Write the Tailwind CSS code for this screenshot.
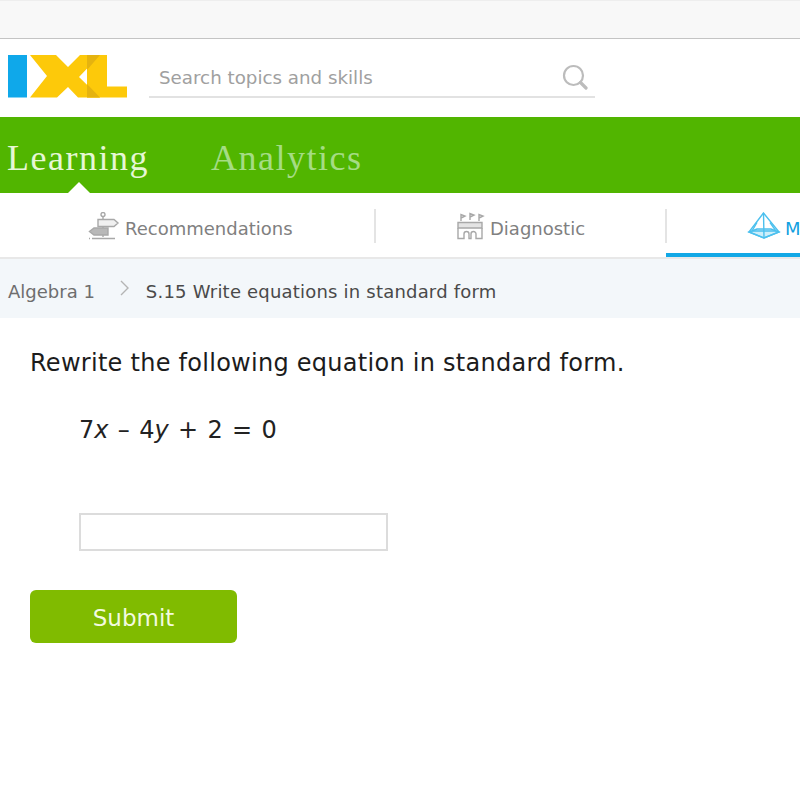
<!DOCTYPE html>
<html>
<head>
<meta charset="utf-8">
<script src="https://cdn.jsdelivr.net/npm/@tailwindcss/browser@4"></script>
</head>
<body class="bg-white font-['DejaVu_Sans',sans-serif] overflow-hidden">
<div class="w-[800px] h-[801px] overflow-hidden flex flex-col">
  <div class="h-[39px] bg-[#f8f8f8] border-b border-[#c4c4c4] border-t border-t-[#eeeeee] shrink-0"></div>

  <div class="h-[78px] flex items-start shrink-0">
    <svg class="ml-[7px] mt-[15px] shrink-0" width="121" height="45" viewBox="7 54 121 45">
      <rect x="8" y="55" width="19" height="42.5" fill="#0fa8ea"/>
      <path d="M30 55H56L68 67L80 55H100L79 77L100 97.5H78L68 87L57 97.5H30L47 76Z" fill="#fdc90a"/>
      <path d="M87 55H107V86.5H127V97.5H87Z" fill="#fdc90a"/>
      <path d="M87 55H100L87 70ZM87 84L100 97.5H87Z" fill="#e5b30f"/>
    </svg>
    <div class="ml-[21px] mt-[16px] w-[446px] h-[43px] border-b-2 border-[#e2e2e2] flex items-center justify-between pl-[10px] pr-[7px] shrink-0">
      <span class="text-[18.25px] text-[#a0a0a0] leading-none mt-[5px]">Search topics and skills</span>
      <svg class="mt-[2px]" width="26" height="26" viewBox="0 0 26 26" fill="none" stroke="#bcbcbc">
        <circle cx="11.5" cy="11.5" r="9.5" stroke-width="2.2"/>
        <path d="M18.5 18.5L24 24" stroke-width="3.2" stroke-linecap="round"/>
      </svg>
    </div>
  </div>

  <div class="relative h-[76px] bg-[#51b500] flex items-center pl-[7px] pt-[5px] shrink-0 font-['Liberation_Serif',serif] text-[36px] tracking-[1.5px]">
    <span class="text-[#e6f7d5] w-[204px] whitespace-nowrap">Learning</span>
    <span class="text-[#a5dc84] whitespace-nowrap">Analytics</span>
    <div class="absolute left-[68px] bottom-0 w-0 h-0 border-x-[11px] border-x-transparent border-b-[11px] border-b-white"></div>
  </div>

  <div class="relative h-[66px] flex border-b-2 border-[#e8e8e8] shrink-0 text-[18px] text-[#808080] whitespace-nowrap">
    <div class="w-[376px] h-[34px] mt-[16px] border-r-2 border-[#e4e4e4] flex items-center pl-[88px] gap-[5px] shrink-0">
      <svg class="translate-y-[2px] shrink-0" width="32" height="32" viewBox="88 212 32 32" fill="none" stroke="#a8a8a8" stroke-width="1.4">
        <circle cx="103" cy="214.5" r="2"/>
        <path d="M103 217V237M92 238.5H115M89 238.5H90" />
        <path d="M98 219.5H114L118 223L114 226.5H98Z" fill="#f0f0f0"/>
        <path d="M108 228H94L89.5 231.5L94 235H108Z" fill="#b8b8b8"/>
      </svg>
      <span class="translate-y-[2px]">Recommendations</span>
    </div>
    <div class="w-[291px] h-[34px] mt-[16px] border-r-2 border-[#e4e4e4] flex items-center pl-[80px] gap-[2px] shrink-0">
      <svg class="translate-y-[2px] shrink-0" width="32" height="32" viewBox="456 212 32 32" fill="none" stroke="#a8a8a8" stroke-width="1.4">
        <path d="M461 221V214.5L465 216L461 218M470 220V213.5L474 215L470 217M479 221V214.5L483 216L479 218" />
        <path d="M458 222.5H482V228H458Z" fill="#e4e4e4"/>
        <path d="M458 228V238.5H464V234A2.5 2.5 0 0 1 469 234V238.5H471V234A2.5 2.5 0 0 1 476 234V238.5H482V228"/>
      </svg>
      <span class="translate-y-[2px]">Diagnostic</span>
    </div>
    <div class="absolute left-[666px] right-0 bottom-0 h-[4px] bg-[#12a8e6]"></div>
    <div class="flex items-center pl-[80px] gap-[4px] h-[34px] mt-[18px] text-[#12a0e0] shrink-0">
      <svg class="shrink-0" width="34" height="32" viewBox="747 212 34 32" fill="none" stroke="#4cc0ee" stroke-width="1.4">
        <path d="M749 232L764 238L779 232L771 229H757Z" fill="#cdeefa"/>
        <path d="M763.5 213L749 232L764 238L779 232Z"/>
        <path d="M763.5 213L764 238M757 222.5L752 231H776L770 222.5"/>
      </svg>
      <span>M</span>
    </div>
  </div>

  <div class="h-[59px] bg-[#f3f7fa] flex items-center pl-[8px] pt-[6px] text-[18px] shrink-0 whitespace-nowrap">
    <span class="text-[#6e6e6e]">Algebra 1</span>
    <svg class="ml-[24px] mb-[8px] shrink-0" width="11" height="16" viewBox="0 0 11 16" fill="none" stroke="#b4b4b4" stroke-width="1.4"><path d="M2 1L9 8L2 15"/></svg>
    <span class="ml-[16px] text-[#4a4a4a] tracking-[0.2px]">S.15 Write equations in standard form</span>
  </div>

  <div class="pl-[30px] flex flex-col items-start">
    <p class="mt-[30px] text-[24px] tracking-[0.27px] leading-[30px] text-[#1c1c1c]">Rewrite the following equation in standard form.</p>
    <p class="mt-[37px] ml-[49px] text-[24px] leading-[30px] text-[#222] whitespace-pre [word-spacing:1.7px]">7<i>x</i> – 4<i>y</i> + 2 = 0</p>
    <input type="text" class="mt-[68px] ml-[49px] w-[309px] h-[38px] border-2 border-[#dcdcdc] bg-white" aria-label="answer">
    <button class="mt-[39px] w-[207px] h-[53px] pt-[4px] rounded-[6px] bg-[#80bb00] text-[#f2fadf] text-[23px]">Submit</button>
  </div>
</div>
</body>
</html>
